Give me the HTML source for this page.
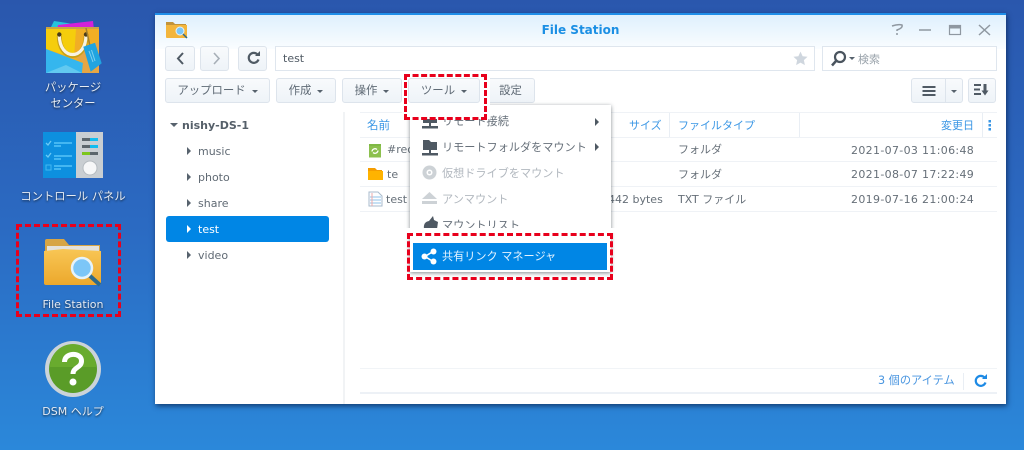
<!DOCTYPE html>
<html lang="ja"><head><meta charset="utf-8"><style>
*{box-sizing:border-box}
html,body{margin:0;padding:0;width:1024px;height:450px;overflow:hidden}
body{background:#2b6ac2}
#w{position:absolute;left:0;top:0;width:1024px;height:450px;overflow:hidden;filter:blur(.35px);background:linear-gradient(#2a57ad 0,#2b6ac2 50%,#2b88da 100%);font-family:"DejaVu Sans","Noto Sans CJK JP",sans-serif;font-size:11px;color:#505a64}
.a{position:absolute;white-space:nowrap}
.ic{position:absolute;display:block}
.lab{position:absolute;color:#e6ecf5;font-size:11.3px;text-align:center;text-shadow:0 1px 2px #123;line-height:15.5px;white-space:nowrap}
.btn{position:absolute;height:25px;background:linear-gradient(#f8fafc,#eef3f8);border:1px solid #dde4ec;border-radius:3px;color:#606b76;text-align:center;line-height:23px;white-space:nowrap;font-size:11.4px}
.car{display:inline-block;width:0;height:0;border:3px solid transparent;border-top:3.5px solid #57626d;border-bottom:0;margin-left:6px;vertical-align:1px}
.tree{position:absolute;left:198px;color:#606a74;font-size:11px;line-height:15px}
.tri{position:absolute;left:187px;width:0;height:0;border:4px solid transparent;border-left:4px solid #57626d;border-right:0}
.hdr{position:absolute;color:#3b97e5;font-size:11px;line-height:15px;white-space:nowrap}
.line{position:absolute;left:360px;width:637px;height:1px;background:#eff2f6}
.vl{position:absolute;top:113px;width:1px;height:24px;background:#e9eef4}
.t{position:absolute;color:#666f78;font-size:11px;line-height:15px;white-space:nowrap}
.m{position:absolute;left:442px;font-size:11.15px;line-height:15px;color:#67707a;white-space:nowrap}
.g{color:#b2b8bf}
.dash{position:absolute;border:3px dashed #e8001c}
</style></head><body><div id="w">

<!-- Package center icon -->
<svg class="ic" style="left:44px;top:18px" width="60" height="58" viewBox="0 0 60 58">
<path d="M6 11L10 3 36 7 36 12z" fill="#27c4dc"/><path d="M13 12L14 7 49 3 50 12z" fill="#d321d8"/>
<rect x="2" y="9" width="53" height="3" fill="#c9a445"/>
<rect x="2" y="11" width="53" height="44" fill="#f1ae25"/>
<path d="M2 11H32L30 40 2 31z" fill="#f5cd0c"/>
<path d="M2 31L39 45 38 55H2z" fill="#35b6ee"/><path d="M2 55L22 47 38 55z" fill="#62c9f0"/>
<path d="M38 55L39 45 30 38 40 28 55 24V55z" fill="#e6a644"/>
<path d="M15.300 18C15.300 44 42 44 42 18" fill="none" stroke="#c8a018" stroke-width="5"/>
<path d="M15.300 17C15.300 43 42 43 42 17" fill="none" stroke="#f8f3e2" stroke-width="3.200"/>
<circle cx="15.300" cy="16.500" r="2.200" fill="#4a3b1a"/><circle cx="42" cy="16.500" r="2.200" fill="#4a3b1a"/>
<path d="M42 10L46 28" stroke="#a5802d" stroke-width="1.500" fill="none"/>
<path d="M39.300 28.700L51 24.700 57.700 45.300 46.700 53.700z" fill="#20a4e0"/>
<path d="M45 33L49 44M47.500 32L51 43" stroke="#7fd0f2"/>
</svg>
<div class="lab" style="left:20px;top:80px;width:106px">パッケージ<br>センター</div>

<!-- Control panel icon -->
<svg class="ic" style="left:43px;top:132px" width="60" height="47" viewBox="0 0 60 47">
<rect y="0" width="60" height="46" fill="#c9ced2"/><rect width="33" height="46" fill="#0d90df"/>
<g fill="#43b7f2"><rect x="11" y="10" width="18" height="2"/><rect x="11" y="13" width="7" height="2"/><rect x="11" y="23" width="18" height="2"/><rect x="11" y="26" width="7" height="2"/><rect x="11" y="33" width="18" height="2"/><rect x="11" y="36" width="7" height="2"/>
<rect x="3" y="33" width="5" height="5" fill="none" stroke="#43b7f2"/></g>
<path d="M3 11l2 2 3-4M3 23l2 2 3-4" stroke="#6cc9f5" fill="none" stroke-width="1.300"/>
<rect x="39" y="6" width="16" height="3" fill="#12bdf0"/><rect x="39" y="6" width="8" height="3" fill="#5c666c"/>
<rect x="39" y="13" width="16" height="3" fill="#12bdf0"/><rect x="39" y="13" width="8" height="3" fill="#5c666c"/>
<rect x="39" y="20" width="16" height="3" fill="#5c666c"/><rect x="39" y="20" width="8" height="3" fill="#7cc61c"/>
<circle cx="47" cy="36" r="7" fill="#f6f7f8" stroke="#b5bbc0"/>
</svg>
<div class="lab" style="left:15px;top:189px;width:116px">コントロール パネル</div>

<!-- File Station icon -->
<svg class="ic" style="left:43px;top:238px" width="60" height="50" viewBox="0 0 60 50">
<defs><linearGradient id="fg" x1="0" y1="0" x2="0" y2="1"><stop offset="0" stop-color="#f8c655"/><stop offset="1" stop-color="#eca82c"/></linearGradient></defs>
<path d="M2 3Q2 1 4 1H21L26 7H57V20H2z" fill="#d7a545"/><rect x="4" y="8" width="52" height="12" fill="#e4e2dc"/>
<path d="M1 13L20 11 58 13V45Q58 47 56 47H3Q1 47 1 45z" fill="url(#fg)"/>
<path d="M46 37L57 47" stroke="#2d6a8c" stroke-width="4"/>
<circle cx="39" cy="30" r="10" fill="#7cc6f7" stroke="#e6f3fa" stroke-width="2.500"/>
</svg>
<div class="lab" style="left:20px;top:297px;width:106px;font-size:11px">File Station</div>

<!-- DSM help icon -->
<svg class="ic" style="left:44px;top:340px" width="58" height="58" viewBox="0 0 58 58">
<circle cx="29" cy="29" r="28" fill="#ccd3d9"/><circle cx="29" cy="29" r="24" fill="#5a9c28"/>
<path d="M6 27a23 23 0 0 1 46 0z" fill="#69ab2e"/>
<path d="M20.500 22c0-10 17-10 17 -1c0 7-8.500 6-8.500 13" fill="none" stroke="#fff" stroke-width="5"/><circle cx="29" cy="42" r="3.500" fill="#fff"/>
</svg>
<div class="lab" style="left:20px;top:404px;width:106px;font-size:11px">DSM ヘルプ</div>

<div class="dash" style="left:16px;top:224px;width:105px;height:93px"></div>

<!-- Window -->
<div class="a" style="left:155px;top:13px;width:851px;height:391px;background:#fff;border-top:2px solid #1f8ee8;box-shadow:1px 2px 5px rgba(5,30,70,.7)"></div>
<div class="a" style="left:155px;top:15px;width:851px;height:34px;background:linear-gradient(#dff0fd,#fafdff)"></div>
<svg class="ic" style="left:165px;top:20px" width="23" height="19" viewBox="0 0 23 19">
<path d="M1 2H8L10 4H21V8H1z" fill="#c2933a"/><path d="M1 5H22V17Q22 18 21 18H2Q1 18 1 17z" fill="#f3b53c"/>
<circle cx="15" cy="11" r="4" fill="#7cc6f7" stroke="#e6f3fa"/><path d="M18 14l4 4" stroke="#2d6a8c" stroke-width="1.500"/></svg>
<div class="a" style="left:155px;top:22px;width:851px;text-align:center;color:#1b8fe4;font-weight:bold;font-size:12px;line-height:16px">File Station</div>
<svg class="ic" style="left:888px;top:22px" width="105" height="16" viewBox="0 0 105 16" fill="none" stroke="#8f98a1" stroke-width="1.500">
<path d="M4 4Q10 2 14 3Q15 6 9 8V9M9 11V13" />
<path d="M31 8H43"/><rect x="61.500" y="3.500" width="11" height="9" stroke-width="1.200"/><path d="M61 5H73" stroke-width="3"/>
<path d="M91 3L102 13M102 3L91 13"/></svg>

<!-- nav row -->
<div class="btn" style="left:165px;top:46px;width:30px"></div>
<svg class="ic" style="left:176px;top:51px" width="9" height="15"><path d="M7 2L2 7.500 7 13" fill="none" stroke="#4f5a64" stroke-width="2"/></svg>
<div class="btn" style="left:200px;top:46px;width:29px"></div>
<svg class="ic" style="left:212px;top:51px" width="9" height="15"><path d="M2 2L7 7.500 2 13" fill="none" stroke="#a7afb7" stroke-width="1.600"/></svg>
<div class="btn" style="left:238px;top:46px;width:29px"></div>
<svg class="ic" style="left:247px;top:51px" width="14" height="14" viewBox="0 0 14 14"><path d="M11.500 8.500A5 5 0 1 1 10.500 3.500" fill="none" stroke="#4f5a64" stroke-width="2.200"/><path d="M8 5H13V0z" fill="#4f5a64"/></svg>
<div class="a" style="left:275px;top:46px;width:540px;height:25px;border:1px solid #dfe6ee;background:#fff"></div>
<div class="a" style="left:283px;top:51px;font-size:11px;line-height:15px;color:#505a64">test</div>
<svg class="ic" style="left:793px;top:51px" width="15" height="15" viewBox="0 0 24 24"><path d="M12 1l3.400 7.300 7.900.9-5.900 5.400 1.600 7.900L12 18.500l-7 4 1.600-7.900L.7 9.200l7.900-.9z" fill="#cfd6de"/></svg>
<div class="a" style="left:822px;top:46px;width:175px;height:25px;border:1px solid #dfe6ee;background:#fff"></div>
<svg class="ic" style="left:830px;top:50px" width="18" height="17" viewBox="0 0 18 17"><circle cx="10" cy="7" r="5" fill="none" stroke="#4a545e" stroke-width="2.200"/><path d="M6 11L2 15.500" stroke="#4a545e" stroke-width="2.500"/></svg>
<div class="a" style="left:849px;top:57px;width:0;height:0;border:3px solid transparent;border-top:3.5px solid #57626d;border-bottom:0"></div>
<div class="a" style="left:858px;top:52px;color:#9aa3ab;line-height:15px;font-size:11px">検索</div>

<!-- toolbar -->
<div class="btn" style="left:165px;top:78px;width:105px">アップロード<span class="car"></span></div>
<div class="btn" style="left:276px;top:78px;width:60px">作成<span class="car"></span></div>
<div class="btn" style="left:342px;top:78px;width:60px">操作<span class="car"></span></div>
<div class="btn" style="left:486px;top:78px;width:49px">設定</div>
<div class="btn" style="left:911px;top:78px;width:52px"></div>
<div class="a" style="left:945px;top:79px;width:1px;height:23px;background:#dde4ec"></div>
<svg class="ic" style="left:921px;top:85px" width="16" height="12"><path d="M1.500 2H14.500M1.500 6H14.500M1.500 10H14.500" stroke="#505a64" stroke-width="2"/></svg>
<div class="a" style="left:951px;top:90px;width:0;height:0;border:3px solid transparent;border-top:3.5px solid #57626d;border-bottom:0"></div>
<div class="btn" style="left:968px;top:78px;width:28px"></div>
<svg class="ic" style="left:974px;top:83px" width="16" height="14" viewBox="0 0 16 14"><path d="M0 2H7M0 6.500H6M0 11H7" stroke="#505a64" stroke-width="2"/><path d="M11 1V8" stroke="#505a64" stroke-width="3"/><path d="M7.500 7.500H14.500L11 12.500z" fill="#505a64"/></svg>

<!-- tree -->
<div class="a" style="left:170px;top:123px;width:0;height:0;border:4px solid transparent;border-top:4.500px solid #57626d;border-bottom:0"></div>
<div class="a" style="left:182px;top:118px;font-weight:bold;color:#555f69;font-size:11px;line-height:15px">nishy-DS-1</div>
<div class="tri" style="top:147px"></div><div class="tree" style="top:144px">music</div>
<div class="tri" style="top:173px"></div><div class="tree" style="top:170px">photo</div>
<div class="tri" style="top:199px"></div><div class="tree" style="top:196px">share</div>
<div class="a" style="left:166px;top:216px;width:163px;height:26px;background:#0086e5;border-radius:3px"></div>
<div class="tri" style="top:225px;border-left-color:#fff"></div><div class="tree" style="top:222px;color:#fff">test</div>
<div class="tri" style="top:251px"></div><div class="tree" style="top:248px">video</div>
<div class="a" style="left:343px;top:112px;width:2px;height:292px;background:#f1f3f5"></div>

<!-- list -->
<div class="line" style="top:112px"></div>
<div class="line" style="top:137px"></div>
<div class="line" style="top:161px"></div>
<div class="line" style="top:186px"></div>
<div class="line" style="top:211px"></div>
<div class="vl" style="left:669px"></div><div class="vl" style="left:799px"></div><div class="vl" style="left:982px"></div>
<div class="hdr" style="left:367px;top:118px;font-size:11.5px">名前</div>
<div class="hdr" style="left:629px;top:118px">サイズ</div>
<div class="hdr" style="left:678px;top:118px">ファイルタイプ</div>
<div class="hdr" style="left:941px;top:118px">変更日</div>
<svg class="ic" style="left:988px;top:120px" width="4" height="11"><path d="M0.500 0H3V2.500H0.500zM0.500 4H3V6.500H0.500zM0.500 8H3V10.500H0.500z" fill="#3b97e5"/></svg>

<svg class="ic" style="left:368px;top:142px" width="14" height="16" viewBox="0 0 14 16"><path d="M1 2H13V4H1z" fill="#7fb944"/><path d="M1 4H13V15.500H1z" fill="#8cc04e"/><path d="M4 9.500a3 3 0 0 1 5-2M10 8.500a3 3 0 0 1-5 2" stroke="#fff" fill="none" stroke-width="1.300"/></svg>
<div class="t" style="left:387px;top:142px">#rec</div>
<svg class="ic" style="left:367px;top:167px" width="16" height="14" viewBox="0 0 16 14"><path d="M1 1H8L10 3H15V6H1z" fill="#f59d00"/><path d="M1 4H16V13H1z" fill="#ffb300"/></svg>
<div class="t" style="left:387px;top:167px">te</div>
<svg class="ic" style="left:368px;top:191px" width="15" height="16" viewBox="0 0 15 16"><path d="M1 1H10L14 5V15H1z" fill="#fdfeff" stroke="#a9bbcc"/><path d="M2 6H13M2 9H13M2 12H13" stroke="#8fc3e8"/><path d="M4 2V15" stroke="#efa9a9"/></svg>
<div class="t" style="left:386px;top:192px">test</div>
<div class="t" style="left:678px;top:142px">フォルダ</div>
<div class="t" style="left:678px;top:167px">フォルダ</div>
<div class="t" style="left:678px;top:192px">TXT ファイル</div>
<div class="t" style="left:851px;top:143px;letter-spacing:.33px">2021-07-03 11:06:48</div>
<div class="t" style="left:851px;top:167px;letter-spacing:.33px">2021-08-07 17:22:49</div>
<div class="t" style="left:851px;top:192px;letter-spacing:.33px">2019-07-16 21:00:24</div>
<div class="t" style="left:608px;top:192px">442 bytes</div>

<!-- status -->
<div class="line" style="top:368px;background:#f1f4f7"></div>
<div class="line" style="top:392px;height:2px;background:#edf1f6"></div>
<div class="a" style="left:878px;top:373px;color:#4a96e0;font-size:11.2px;line-height:15px">3 個のアイテム</div>
<div class="a" style="left:963px;top:373px;width:1px;height:17px;background:#e9eef4"></div>
<svg class="ic" style="left:974px;top:374px" width="14" height="14" viewBox="0 0 14 14"><path d="M11.500 8.500A5 5 0 1 1 10.500 3.500" fill="none" stroke="#1d8ae5" stroke-width="2.200"/><path d="M8 5H13V0z" fill="#1d8ae5"/></svg>

<!-- dropdown -->
<div class="a" style="left:410px;top:105px;width:201px;height:167px;background:#fff;box-shadow:0 1px 4px rgba(30,40,50,.55)"></div>
<svg class="ic" style="left:421px;top:113px" width="18" height="17" viewBox="0 0 18 17"><path d="M2 1H16V10H2zM8 10H10V13H8zM1 13H17V15.500H1z" fill="#4f5963"/></svg>
<div class="m" style="top:114px">リモート接続</div>
<div class="a" style="left:595px;top:118px;width:0;height:0;border:4px solid transparent;border-left:4px solid #4f5963;border-right:0"></div>
<svg class="ic" style="left:421px;top:139px" width="18" height="17" viewBox="0 0 18 17"><path d="M2 1H8L10 3H16V11H2zM8 11H10V14H8zM1 14H17V16.500H1z" fill="#4f5963"/></svg>
<div class="m" style="top:140px">リモートフォルダをマウント</div>
<div class="a" style="left:595px;top:143px;width:0;height:0;border:4px solid transparent;border-left:4px solid #4f5963;border-right:0"></div>
<svg class="ic" style="left:422px;top:165px" width="15" height="15" viewBox="0 0 15 15"><circle cx="7.500" cy="7.500" r="7" fill="#cdd2d6"/><circle cx="7.500" cy="7.500" r="3" fill="#fff"/><circle cx="7.500" cy="7.500" r="1.500" fill="#cdd2d6"/></svg>
<div class="m g" style="top:166px">仮想ドライブをマウント</div>
<svg class="ic" style="left:421px;top:191px" width="17" height="15" viewBox="0 0 17 15"><path d="M8.500 1L16 8H1zM1 10H16V13H1z" fill="#cdd2d6"/></svg>
<div class="m g" style="top:192px">アンマウント</div>
<svg class="ic" style="left:423px;top:216px" width="16" height="13" viewBox="0 0 16 13"><path d="M1 13Q0 6 6 5L10 0 11 4 15 6 14 13z" fill="#4f5963"/></svg>
<div class="m" style="top:218px">マウントリスト</div>

<!-- white patch + box around tools -->
<div class="a" style="left:402px;top:72px;width:88px;height:47px;background:#fff"></div>
<div class="btn" style="left:408px;top:78px;width:72px">ツール<span class="car"></span></div>
<div class="a" style="left:402px;top:228px;width:220px;height:5px;background:#fff"></div>
<div class="a" style="left:413px;top:243px;width:194px;height:27px;background:#0086e5"></div>
<svg class="ic" style="left:421px;top:248px" width="16" height="17" viewBox="0 0 16 17"><path d="M12 3.500L4 8.500 12 13.500" stroke="#fff" stroke-width="1.600" fill="none"/><circle cx="12.500" cy="3.500" r="3" fill="#fff"/><circle cx="3.500" cy="8.500" r="3" fill="#fff"/><circle cx="12.500" cy="13.500" r="3" fill="#fff"/></svg>
<div class="m" style="top:249px;color:#e4f3ff">共有リンク マネージャ</div>

<!-- red dashes -->
<div class="dash" style="left:404px;top:74px;width:83px;height:46px"></div>
<div class="dash" style="left:407px;top:233px;width:206px;height:47px"></div>
</div></body></html>
